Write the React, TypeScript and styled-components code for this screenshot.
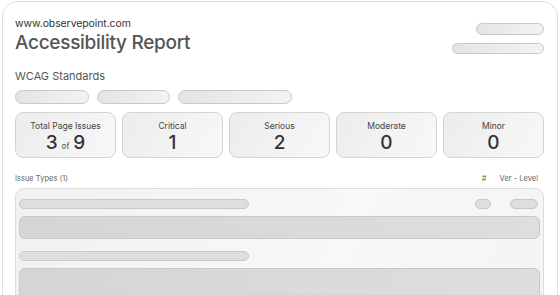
import styled, { createGlobalStyle } from 'styled-components';

const GlobalStyle = createGlobalStyle`
  html, body {
    margin: 0;
    padding: 0;
    background: #ffffff;
    height: 295px;
    overflow: hidden;
  }
  body {
    font-family: Inter, "Noto Sans", sans-serif;
  }
`;

const Card = styled.div`
  margin: 1px 2px 0 2px;
  height: 320px;
  box-sizing: border-box;
  border: 1px solid #dedede;
  border-bottom: none;
  border-radius: 16px 16px 0 0;
  padding: 15px 13px 0 12px;
  background: #fff;
`;

const Header = styled.div`
  display: flex;
  justify-content: space-between;
  align-items: flex-start;
`;

const Site = styled.div`
  font-size: 10.5px;
  line-height: 13px;
  color: #333;
  letter-spacing: -0.1px;
`;

const Title = styled.h1`
  margin: 1px 0 0;
  font-size: 19px;
  line-height: 23px;
  font-weight: 500;
  color: #555;
  letter-spacing: -0.3px;
`;

const PillStack = styled.div`
  display: flex;
  flex-direction: column;
  align-items: flex-end;
  gap: 8px;
  padding-top: 6px;
`;

const Pill = styled.div<{ $w: number; $h?: number }>`
  width: ${({ $w }) => $w}px;
  height: ${({ $h }) => $h ?? 12}px;
  box-sizing: border-box;
  border: 1px solid #c9c9c9;
  border-radius: 8px;
  background: linear-gradient(100deg, #e4e4e4, #f3f3f3);
`;

const Section = styled.div`
  margin-top: 16px;
  font-size: 11px;
  line-height: 13px;
  color: #555;
`;

const TagRow = styled.div`
  display: flex;
  gap: 8px;
  margin-top: 7px;
`;

const Stats = styled.div`
  display: grid;
  grid-template-columns: repeat(5, 1fr);
  gap: 6px;
  margin-top: 8px;
`;

const Stat = styled.div`
  height: 46px;
  box-sizing: border-box;
  border: 1px solid #d4d4d4;
  border-radius: 8px;
  background: linear-gradient(120deg, #ececec, #f8f8f8);
  display: flex;
  flex-direction: column;
  align-items: center;
  padding-top: 8px;
`;

const StatLabel = styled.div`
  font-size: 8.5px;
  line-height: 11px;
  color: #444;
`;

const StatValue = styled.div`
  font-size: 19px;
  line-height: 22px;
  font-weight: 500;
  color: #333;
  display: flex;
  align-items: baseline;
  gap: 4px;
`;

const Of = styled.span`
  font-size: 8px;
  font-weight: 400;
  color: #444;
`;

const ListHead = styled.div`
  display: flex;
  justify-content: space-between;
  margin-top: 16px;
  font-size: 7.5px;
  line-height: 10px;
  color: #666;
  padding-right: 6px;
`;

const HeadRight = styled.div`
  display: flex;
  gap: 13px;
`;

const Table = styled.div`
  margin-top: 4px;
  height: 140px;
  box-sizing: border-box;
  border: 1px solid #dcdcdc;
  border-radius: 9px;
  background: linear-gradient(110deg, #f1f1f1, #f8f8f8 60%, #f4f4f4);
  padding: 10px 3px 0 3px;
`;

const RowTop = styled.div`
  display: flex;
  align-items: center;
  padding-right: 2px;
`;

const Bar = styled.div`
  width: 230px;
  height: 10px;
  box-sizing: border-box;
  border: 1px solid #c8c8c8;
  border-radius: 6px;
  background: #dedede;
`;

const Spacer = styled.div`
  flex: 1;
`;

const SmallPill = styled.div<{ $w: number }>`
  width: ${({ $w }) => $w}px;
  height: 10px;
  box-sizing: border-box;
  border: 1px solid #c8c8c8;
  border-radius: 6px;
  background: #dedede;
  margin-left: ${({ $w }) => ($w > 20 ? 19 : 0)}px;
`;

const Block = styled.div<{ $h: number }>`
  margin-top: 7px;
  margin-bottom: 12px;
  height: ${({ $h }) => $h}px;
  box-sizing: border-box;
  border: 1px solid #c9c9c9;
  border-radius: 6px;
  background: linear-gradient(110deg, #d5d5d5, #dedede);
`;

const stats = [
  { label: 'Critical', value: '1' },
  { label: 'Serious', value: '2' },
  { label: 'Moderate', value: '0' },
  { label: 'Minor', value: '0' },
];

export default function App() {
  return (
    <>
      <GlobalStyle />
      <Card>
        <Header>
          <div>
            <Site>www.observepoint.com</Site>
            <Title>Accessibility Report</Title>
          </div>
          <PillStack>
            <Pill $w={68} />
            <Pill $w={92} $h={11} />
          </PillStack>
        </Header>
        <Section>WCAG Standards</Section>
        <TagRow>
          <Pill $w={74} $h={14} />
          <Pill $w={73} $h={14} />
          <Pill $w={114} $h={14} />
        </TagRow>
        <Stats>
          <Stat>
            <StatLabel>Total Page Issues</StatLabel>
            <StatValue>
              3 <Of>of</Of> 9
            </StatValue>
          </Stat>
          {stats.map((s) => (
            <Stat key={s.label}>
              <StatLabel>{s.label}</StatLabel>
              <StatValue>{s.value}</StatValue>
            </Stat>
          ))}
        </Stats>
        <ListHead>
          <span>Issue Types (1)</span>
          <HeadRight>
            <span>#</span>
            <span>Ver - Level</span>
          </HeadRight>
        </ListHead>
        <Table>
          <RowTop>
            <Bar />
            <Spacer />
            <SmallPill $w={16} />
            <SmallPill $w={28} />
          </RowTop>
          <Block $h={23} />
          <RowTop>
            <Bar />
          </RowTop>
          <Block $h={60} />
        </Table>
      </Card>
    </>
  );
}
